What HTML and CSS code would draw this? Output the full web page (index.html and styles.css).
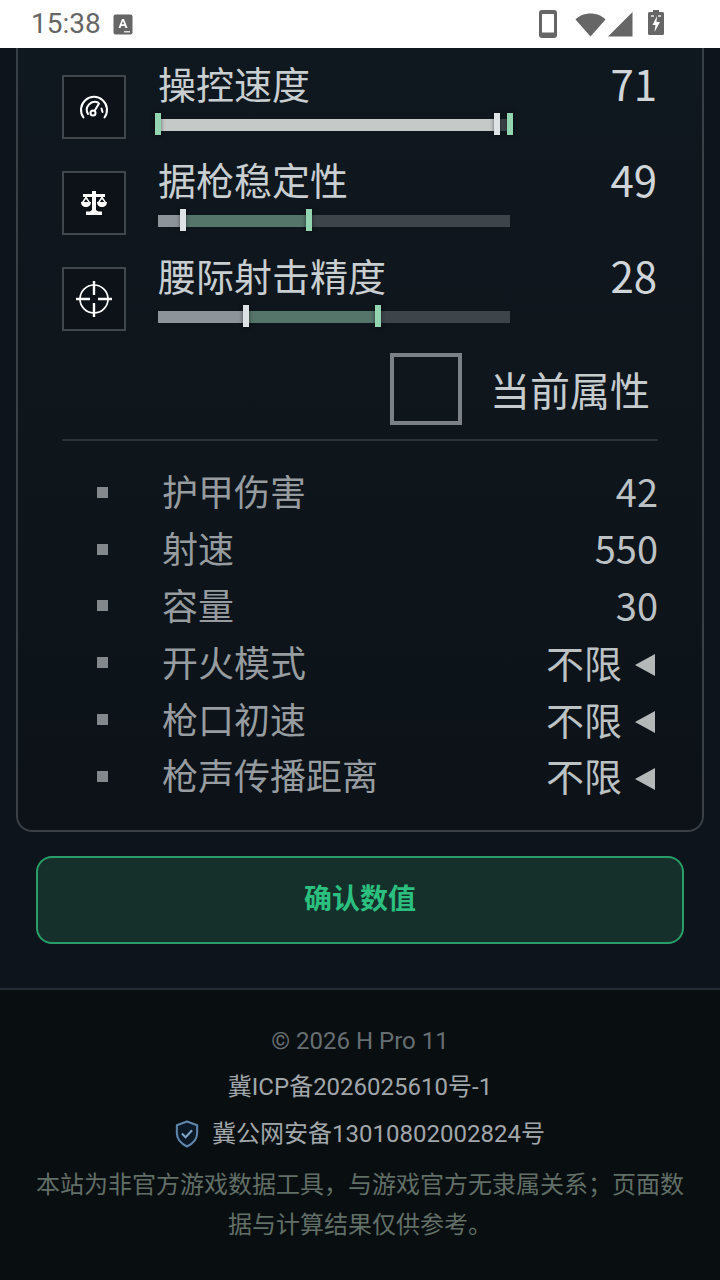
FILE: index.html
```html
<!DOCTYPE html>
<html lang="zh">
<head>
<meta charset="utf-8">
<title>H Pro 11</title>
<link rel="stylesheet" href="styles.css">
</head>
<body>
<div class="screen">
  <header class="status">
    <span class="time">15:38</span>
    <svg class="st-a" width="20" height="21" viewBox="0 0 20 21"><rect width="19" height="20" x="0.5" y="0.5" rx="2" fill="#666"/><path d="M5.500 14 9 5h2l3.500 9h-2l-.7-2H8.200l-.7 2zM8.800 10.300h2.400L10 7z" fill="#fff"/><rect x="11" y="17" width="6" height="1.500" fill="#ddd"/></svg>
    <span class="st-fill"></span>
    <svg class="st-phone" width="18" height="28" viewBox="0 0 18 28"><rect width="18" height="28" rx="3" fill="#666"/><rect x="3" y="4" width="12" height="18.500" fill="#fff"/></svg>
    <svg class="st-wifi" width="31" height="25" viewBox="0 0 31 25"><path d="M0.500 7.500C8 -0.500 23 -0.500 30.500 7.500L15.500 24.500z" fill="#666"/></svg>
    <svg class="st-signal" width="25" height="25" viewBox="0 0 25 25"><path d="M0 24.500 24.500 0v24.500z" fill="#666"/></svg>
    <svg class="st-batt" width="16" height="25" viewBox="0 0 16 25"><path d="M5 0h6v2h3.500a1.500 1.500 0 0 1 1.500 1.500V23.500a1.500 1.500 0 0 1-1.500 1.500h-13A1.500 1.500 0 0 1 0 23.500V3.500A1.500 1.500 0 0 1 1.500 2H5z" fill="#666"/><path d="M9 6 4.500 15H7.500L6.500 22 12 12H8.500z" fill="#fff"/><path d="M3 5h3v2H3zM10 5h3v2h-3z" fill="#ccc"/></svg>
  </header>
  <main class="main">
    <section class="card">
      <div class="stat">
        <div class="stat-icon">
          <svg width="30" height="26" viewBox="0 0 30 26" fill="none" stroke="#fff" stroke-width="2" stroke-linecap="round"><path d="M4.500 23.500A13 13 0 1 1 25.500 23.500"/><path d="M9 20A8 8 0 0 1 19 8.500"/><circle cx="14" cy="19" r="2.500"/><path d="M15.500 17 20 9.500"/><path d="M22.500 14.500 23.500 18"/></svg>
        </div>
        <div class="stat-body">
          <div class="stat-name">操控速度</div>
          <div class="bar">
            <span class="fill-cur fill-light" style="width:96.3%"></span>
            <span class="mark mark-cur" style="left:96.3%"></span>
            <span class="mark mark-new" style="left:0%"></span>
            <span class="mark mark-new" style="left:100%"></span>
          </div>
        </div>
        <div class="stat-val">71</div>
      </div>
      <div class="stat">
        <div class="stat-icon">
          <svg width="26" height="24" viewBox="0 0 26 24" fill="#fff"><path d="M11 0h4v3h9v3h-9v13l2 1.500h4V24H5v-3.500h4l2-1.500V6H2V3h9z"/><path d="M0 11h10c0 3-2.200 5-5 5s-5-2-5-5zM16 11h10c0 3-2.200 5-5 5s-5-2-5-5z"/><path d="M5 5 1 11h1.800L5 8l2.200 3H9zM21 5l-4 6h1.800L21 8l2.200 3H25z"/></svg>
        </div>
        <div class="stat-body">
          <div class="stat-name">据枪稳定性</div>
          <div class="bar">
            <span class="fill-cur" style="width:7.1%"></span>
            <span class="fill-new" style="left:7.1%;width:35.8%"></span>
            <span class="mark mark-cur" style="left:7.1%"></span>
            <span class="mark mark-new" style="left:42.9%"></span>
          </div>
        </div>
        <div class="stat-val">49</div>
      </div>
      <div class="stat">
        <div class="stat-icon">
          <svg width="36" height="36" viewBox="0 0 36 36" fill="none" stroke="#fff" stroke-width="1.700"><circle cx="18" cy="18" r="14"/><path stroke-width="2.400" d="M18 0v14M18 22v14M0 18h14M22 18h14"/></svg>
        </div>
        <div class="stat-body">
          <div class="stat-name">腰际射击精度</div>
          <div class="bar">
            <span class="fill-cur" style="width:25%"></span>
            <span class="fill-new" style="left:25%;width:37.5%"></span>
            <span class="mark mark-cur" style="left:25%"></span>
            <span class="mark mark-new" style="left:62.5%"></span>
          </div>
        </div>
        <div class="stat-val">28</div>
      </div>
      <div class="legend">
        <span class="legend-box"></span>
        <span class="legend-text">当前属性</span>
      </div>
      <div class="attrs">
        <div class="attr"><span class="dot"></span><span class="attr-name">护甲伤害</span><span class="attr-val">42</span></div>
        <div class="attr"><span class="dot"></span><span class="attr-name">射速</span><span class="attr-val">550</span></div>
        <div class="attr"><span class="dot"></span><span class="attr-name">容量</span><span class="attr-val">30</span></div>
        <div class="attr"><span class="dot"></span><span class="attr-name">开火模式</span><span class="attr-val">不限</span><span class="tri"></span></div>
        <div class="attr"><span class="dot"></span><span class="attr-name">枪口初速</span><span class="attr-val">不限</span><span class="tri"></span></div>
        <div class="attr"><span class="dot"></span><span class="attr-name">枪声传播距离</span><span class="attr-val">不限</span><span class="tri"></span></div>
      </div>
    </section>
    <button class="confirm" type="button"><span class="confirm-text">确认数值</span></button>
  </main>
  <footer class="footer">
    <p class="copy">© 2026 H Pro 11</p>
    <p class="lic">冀ICP备2026025610号-1</p>
    <p class="lic lic-police">
      <svg width="24" height="28" viewBox="0 0 26 30" fill="none"><path d="M13 1.500 24 5.500V14c0 7-4.500 11.500-11 14.500C6.500 25.500 2 21 2 14V5.500z" stroke="#5f87ab" stroke-width="2.200" fill="#0b1826" stroke-linejoin="round"/><path d="M7.500 14.500 11.500 18.500 18.500 11" stroke="#7fa6c8" stroke-width="2.200"/></svg>
      <span>冀公网安备13010802002824号</span>
    </p>
    <p class="note">本站为非官方游戏数据工具，与游戏官方无隶属关系；页面数据与计算结果仅供参考。</p>
  </footer>
</div>
</body>
</html>
```
FILE: styles.css
```css
* { box-sizing: border-box; }
html, body { margin: 0; padding: 0; background: #0e151c; }
.screen {
  width: 720px;
  height: 1280px;
  overflow: hidden;
  display: flex;
  flex-direction: column;
  font-family: "Noto Sans CJK SC", "Noto Sans", sans-serif;
}
.status {
  height: 48px;
  flex: none;
  background: #fff;
  display: flex;
  align-items: center;
  padding: 0 56px 0 31px;
}
.time { font: 400 28px/1 Roboto, sans-serif; color: #666; }
.st-a { margin-left: 12px; }
.st-fill { flex: 1; }
.st-phone { margin-right: 18px; margin-bottom: 1px; }
.st-wifi { margin-right: 2px; }
.st-batt { margin-left: 15px; margin-bottom: 3px; }

.main {
  flex: 1;
  min-height: 0;
  padding: 0 16px;
  background: #0e141c;
  display: flex;
  flex-direction: column;
}
.card {
  height: 784px;
  border: 2px solid #3a4146;
  border-top: 0;
  border-radius: 0 0 16px 16px;
  background: linear-gradient(180deg, #10181f 0%, #0c1218 100%);
  padding: 0 44px;
  display: flex;
  flex-direction: column;
}
.stat {
  height: 96px;
  flex: none;
  display: flex;
  align-items: flex-start;
}
.stat-icon {
  width: 64px;
  height: 64px;
  margin-top: 27px;
  border: 2px solid #40484e;
  display: flex;
  align-items: center;
  justify-content: center;
  flex: none;
  background: #0c1218;
}
.stat-body { width: 352px; margin-left: 32px; flex: none; }
.stat-name {
  font-size: 38px;
  line-height: 54px;
  margin-top: 8px;
  color: #c9ced1;
  white-space: nowrap;
}
.bar {
  position: relative;
  height: 12px;
  margin-top: 9px;
  background: #3d444a;
}
.fill-cur { position: absolute; left: 0; top: 0; bottom: 0; background: #8e959a; }
.fill-light { background: #c5cac8; }
.fill-new { position: absolute; top: 0; bottom: 0; background: #55756a; }
.mark {
  position: absolute;
  top: -6px;
  width: 6px;
  height: 22px;
  margin-left: -3px;
  box-shadow: 0 0 4px rgba(0, 0, 0, .5);
}
.mark-cur { background: #dde2e5; }
.mark-new { background: #93d5b0; }
.stat-val {
  flex: 1;
  text-align: right;
  font-size: 42px;
  line-height: 54px;
  margin-top: 8px;
  color: #d0d5d9;
  padding-right: 1px;
}
.legend {
  height: 72px;
  margin-top: 17px;
  flex: none;
  display: flex;
  align-items: center;
  padding-left: 328px;
}
.legend-box { width: 72px; height: 72px; border: 4px solid #7b8186; }
.legend-text { margin-left: 28px; font-size: 40px; color: #c6cbce; white-space: nowrap; }
.attrs {
  margin-top: 14px;
  border-top: 2px solid #2a3238;
  padding-top: 23px;
  display: flex;
  flex-direction: column;
}
.attr {
  height: 56.800px;
  display: flex;
  align-items: center;
  padding-left: 35px;
}
.dot { width: 11px; height: 11px; background: #82888b; flex: none; }
.attr-name { margin-left: 54px; flex: 1; font-size: 36px; line-height: 50px; padding-bottom: 4px; color: #969c9f; }
.attr-val { font-size: 38px; line-height: 50px; padding-bottom: 2px; color: #bcc1c4; }
.tri {
  width: 0;
  height: 0;
  margin-left: 13px;
  margin-right: 3px;
  margin-top: 5px;
  border-style: solid;
  border-width: 11.500px 20px 11.500px 0;
  border-color: transparent #b4b8b8 transparent transparent;
}
.confirm {
  height: 88px;
  margin: 24px 20px 0;
  flex: none;
  padding: 0 0 6px;
  border: 2px solid #2a9d68;
  border-radius: 16px;
  background: #15302b;
  color: #2bc07f;
  font: 700 28px "Noto Sans CJK SC", sans-serif;
}
.footer {
  height: 292px;
  flex: none;
  background: #090e11;
  border-top: 2px solid #252c33;
  padding: 33px 32px 0;
  text-align: center;
  font-size: 24px;
}
.footer p { margin: 0; }
.footer .copy { font-family: Roboto, "Noto Sans CJK SC", sans-serif; color: #666e72; line-height: 36px; }
.footer .lic { font-family: Roboto, "Noto Sans CJK SC", sans-serif; color: #a0a6aa; line-height: 36px; margin-top: 10px; }
.footer .lic-police { display: flex; align-items: center; justify-content: center; gap: 13px; margin-top: 11px; }
.footer .note { color: #626f67; line-height: 40px; margin-top: 11px; }
```
